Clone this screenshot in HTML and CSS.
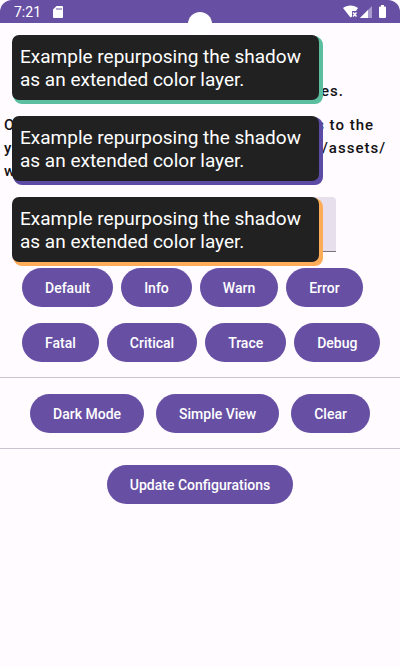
FILE: index.html
```html
<!DOCTYPE html>
<html lang="en">
<head>
<meta charset="utf-8">
<meta name="viewport" content="width=device-width, initial-scale=1">
<title>Toasts</title>
<link rel="stylesheet" href="styles.css">
</head>
<body>
<header class="status">
  <span class="clock">7:21</span>
  <svg class="card" width="10" height="12" viewBox="0 0 10 12" aria-hidden="true"><path fill="#fff" d="M3.6 0H9a1 1 0 0 1 1 1v10a1 1 0 0 1-1 1H1a1 1 0 0 1-1-1V3.600z"/><path stroke="#6750a4" stroke-width="1" d="M4 2v2M6 2v2M8 2v2"/></svg>
  <span class="camera"></span>
  <svg class="signals" width="44" height="14" viewBox="0 0 44 14" aria-hidden="true">
    <path fill="#fff" d="M0 3C4-.4 11-.4 15 3L13 6H9v5.500L7.500 12.500z"/>
    <path stroke="#fff" stroke-width="1.400" d="M10 7.500l3.500 4M13.500 7.500l-3.500 4"/>
    <path fill="#a99bcd" d="M29 1v12H17z"/><path fill="#fff" d="M25 5v8h-8z"/>
    <path fill="#fff" d="M37 1.500h1V0h3v1.500h1q1 0 1 1V12q0 1-1 1h-5q-1 0-1-1V2.500q0-1 1-1z"/>
  </svg>
</header>
<main>
  <section class="intro">
    <p class="lead">es.</p>
    <p class="line"><span>O</span><span class="rest short">s to the</span></p>
    <p class="line"><span>y</span><span class="rest">/assets/</span></p>
    <p class="line"><span>w</span></p>
  </section>
  <input class="field" type="text" aria-label="Message">
  <div class="levels">
    <button>Default</button><button>Info</button><button>Warn</button><button>Error</button>
  </div>
  <div class="levels second">
    <button>Fatal</button><button>Critical</button><button>Trace</button><button>Debug</button>
  </div>
  <div class="actions">
    <button>Dark Mode</button><button>Simple View</button><button>Clear</button>
  </div>
  <div class="actions">
    <button>Update Configurations</button>
  </div>
</main>
<div class="toasts">
  <div class="toast green" role="status">Example repurposing the shadow<br>as an extended color layer.</div>
  <div class="toast purple" role="status">Example repurposing the shadow<br>as an extended color layer.</div>
  <div class="toast orange" role="status">Example repurposing the shadow<br>as an extended color layer.</div>
</div>
</body>
</html>
```
FILE: styles.css
```css
* { box-sizing: border-box; }
html { background: #fffbff; }
body { margin: 0; position: relative; font-family: Roboto, sans-serif; color: #121114; }
.status {
  position: relative;
  display: flex;
  align-items: center;
  height: 23px;
  padding: 1px 13px 0 14px;
  background: #6750a4;
  border-radius: 12px 12px 0 0;
  color: #fff;
}
.clock { font-size: 14px; font-weight: 400; line-height: 22px; }
.card { margin-left: 12px; }
.signals { margin-left: auto; }
.camera {
  position: absolute;
  top: 12px;
  left: 50%;
  width: 24px;
  height: 24px;
  margin-left: -12px;
  border-radius: 50%;
  background: #fff;
}
.intro { padding: 57px 4px 0; font-size: 15px; font-weight: 500; letter-spacing: 1px; }
.intro p { margin: 0; line-height: 23px; }
.intro .lead { margin: 0 52px 11px; text-align: right; }
.line { display: flex; justify-content: space-between; }
.rest { margin-right: 10px; white-space: nowrap; }
.short { margin-right: 22px; }
.field {
  display: block;
  width: 68%;
  height: 55px;
  margin: 14px auto 16px;
  border: 0;
  border-bottom: 1px solid #79747e;
  border-radius: 4px 4px 0 0;
  background: #e7e0ec;
}
button {
  height: 39px;
  padding: 0 23px;
  border: 0;
  border-radius: 20px;
  background: #6750a4;
  color: #fff;
  font: 500 14px Roboto, sans-serif;
  white-space: nowrap;
}
.levels { display: flex; gap: 8px; padding: 0 22px; }
.second { padding-bottom: 15px; margin-top: 16px; }
.actions { display: flex; justify-content: center; gap: 12px; padding: 16px 0 15px; border-top: 1px solid #cac4d0; }
.toasts { position: absolute; top: 35px; left: 12px; display: grid; gap: 16px; }
.toast {
  padding: 10px 18px 9px 8px;
  border-radius: 7px;
  background: #212121;
  color: #fff;
  font-size: 19px;
  line-height: 23px;
  white-space: nowrap;
}
.green { box-shadow: 2px 2px 0 1px #5bbf9f, 3px 3px 0 1px #5bbf9f; }
.purple { box-shadow: 2px 2px 0 1px #5c4ba5, 3px 3px 0 1px #5c4ba5; }
.orange { box-shadow: 2px 2px 0 1px #ffac59, 3px 3px 0 1px #ffac59; }
```
